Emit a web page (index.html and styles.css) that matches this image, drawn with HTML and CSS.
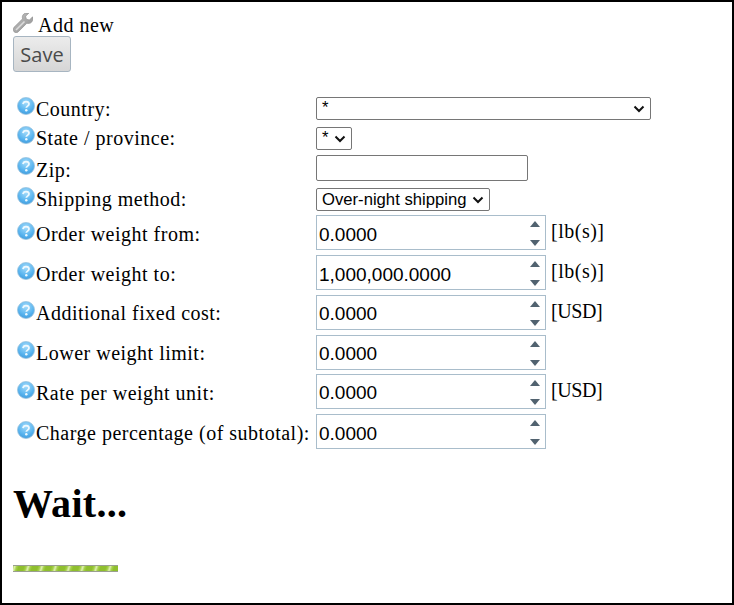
FILE: index.html
```html
<!DOCTYPE html>
<html lang="en">
<head>
<meta charset="utf-8">
<title>Add new</title>
<link rel="stylesheet" href="styles.css">
</head>
<body>
<div class="page">
  <div class="heading">
    <svg class="wrench" viewBox="0 0 20 20" width="20" height="20"><defs><linearGradient id="wg" x1="0" y1="0" x2="1" y2="1"><stop offset="0" stop-color="#c4c4c4"/><stop offset="1" stop-color="#8f8f8f"/></linearGradient></defs><path d="M19.600 3.800 16.400 7l-3-.8-.8-3L15.800.2C13.400-.4 10.900.1 9.800 2.200c-.6 1.200-.6 2.500-.2 3.600L1 14.300c-1.300 1.300-1.300 3.200 0 4.400 1.300 1.300 3.200 1.300 4.400 0l8.500-8.500c1.200.4 2.500.4 3.600-.2 2.300-1.200 2.900-4 2.200-6.200z" fill="url(#wg)" stroke="#8a8a8a" stroke-width=".6"/><path d="M3 17 11.500 8.500" stroke="#dcdcdc" stroke-width="1.600"/></svg>
    <span>Add new</span>
  </div>
  <button class="save" type="button">Save</button>
  <div class="form">
    <div class="row r1"><div class="label"><svg class="help" viewBox="0 0 18 18"><use href="#q"/></svg><span>Country:</span></div><select class="sel s-wide"><option>*</option></select></div>
    <div class="row r2"><div class="label"><svg class="help" viewBox="0 0 18 18"><use href="#q"/></svg><span>State / province:</span></div><select class="sel s-state"><option>*</option></select></div>
    <div class="row r3"><div class="label"><svg class="help" viewBox="0 0 18 18"><use href="#q"/></svg><span>Zip:</span></div><input class="zip" type="text"></div>
    <div class="row r4"><div class="label"><svg class="help" viewBox="0 0 18 18"><use href="#q"/></svg><span>Shipping method:</span></div><select class="sel s-ship"><option>Over-night shipping</option></select></div>
    <div class="row rn rlow"><div class="label"><svg class="help" viewBox="0 0 18 18"><use href="#q"/></svg><span>Order weight from:</span></div><div class="num"><span>0.0000</span><i class="spin"><b class="up"></b><b class="down"></b></i></div><span class="unit">[lb(s)]</span></div>
    <div class="row rn rlow"><div class="label"><svg class="help" viewBox="0 0 18 18"><use href="#q"/></svg><span>Order weight to:</span></div><div class="num"><span>1,000,000.0000</span><i class="spin"><b class="up"></b><b class="down"></b></i></div><span class="unit">[lb(s)]</span></div>
    <div class="row rn rhigh"><div class="label"><svg class="help" viewBox="0 0 18 18"><use href="#q"/></svg><span>Additional fixed cost:</span></div><div class="num"><span>0.0000</span><i class="spin"><b class="up"></b><b class="down"></b></i></div><span class="unit usd">[USD]</span></div>
    <div class="row rn r8 rhigh"><div class="label"><svg class="help" viewBox="0 0 18 18"><use href="#q"/></svg><span>Lower weight limit:</span></div><div class="num"><span>0.0000</span><i class="spin"><b class="up"></b><b class="down"></b></i></div></div>
    <div class="row rn"><div class="label"><svg class="help" viewBox="0 0 18 18"><use href="#q"/></svg><span>Rate per weight unit:</span></div><div class="num"><span>0.0000</span><i class="spin"><b class="up"></b><b class="down"></b></i></div><span class="unit usd">[USD]</span></div>
    <div class="row rn rlast"><div class="label"><svg class="help" viewBox="0 0 18 18"><use href="#q"/></svg><span>Charge percentage (of subtotal):</span></div><div class="num"><span>0.0000</span><i class="spin"><b class="up"></b><b class="down"></b></i></div></div>
  </div>
  <h1 class="wait">Wait...</h1>
  <div class="progress"></div>
</div>
<svg class="defs" width="0" height="0" aria-hidden="true">
  <defs>
    <radialGradient id="qg" cx=".5" cy=".3" r=".75"><stop offset="0" stop-color="#a5dcfb"/><stop offset=".65" stop-color="#55b2ee"/><stop offset="1" stop-color="#3f97d8"/></radialGradient>
    <symbol id="q" viewBox="0 0 18 18">
      <circle cx="9" cy="9" r="8.500" fill="url(#qg)" stroke="#9cc4de" stroke-width=".8"/>
      <path d="M6 7.200C6.200 5.400 7.500 4.600 9 4.600c1.800 0 3 1 3 2.500 0 2-2.700 2-2.700 3.700" fill="none" stroke="#eef9ff" stroke-width="1.800"/>
      <circle cx="9.300" cy="13.200" r="1.200" fill="#eef9ff"/>
    </symbol>
  </defs>
</svg>
</body>
</html>
```
FILE: styles.css
```css
* { box-sizing: border-box; }
html, body { margin: 0; padding: 0; }
body { width: 734px; height: 605px; overflow: hidden; background: #fff; }
.page {
  height: 605px;
  border: 2px solid #000;
  padding: 11px 11px 0;
  font-family: "Liberation Serif", serif;
  font-size: 20px;
  letter-spacing: .5px;
  color: #000;
}
.heading { display: flex; align-items: flex-start; height: 23px; line-height: 24px; }
.wrench { flex: none; margin-right: 5px; }
.save {
  display: block;
  width: 58px;
  height: 36px;
  padding: 0;
  border: 1px solid #a7b5c1;
  border-radius: 3px;
  background: linear-gradient(#ececec, #d6d6d6);
  color: #4a4a4a;
  font: 20px "Open Sans", sans-serif;
}
.form { margin-top: 25px; }
.row { display: flex; align-items: flex-start; }
.r1 { height: 30px; }
.r2 { height: 28px; }
.r3 { height: 33px; }
.r4 { height: 27px; }
.rn { height: 40px; }
.r8 { height: 39px; }
.label { width: 303px; flex: none; display: flex; align-items: flex-start; padding-left: 4px; }
.help { width: 18px; height: 18px; flex: none; margin-right: 1px; }
.label span { line-height: 24px; white-space: nowrap; }
.r2 .label { margin-top: -1px; }
.r3 .help { margin-top: 2px; }
.r3 .label span { padding-top: 3px; }
.r4 .help { margin-top: -1px; }
.r4 .label span { margin-top: -1px; }
.rn .label { padding-top: 7px; }
.rhigh .label { padding-top: 6px; }
.sel {
  appearance: none;
  height: 23px;
  padding: 0 0 2px 5px;
  border: 1px solid #767676;
  border-radius: 2px;
  background: #fff url("data:image/svg+xml,%3Csvg xmlns='http://www.w3.org/2000/svg' width='12' height='8'%3E%3Cpath d='M1.500 1.500 6 6l4.500-4.500' fill='none' stroke='%23111' stroke-width='2'/%3E%3C/svg%3E") no-repeat right 5px center;
  color: #000;
  font: 16.67px "Liberation Sans", sans-serif;
}
.s-wide { width: 335px; }
.s-state { width: 36px; }
.s-ship { width: 174px; padding-bottom: 0; }
.zip { width: 212px; height: 26px; border: 1px solid #767676; border-radius: 2px; padding: 0; }
.num {
  width: 230px;
  height: 35px;
  flex: none;
  display: flex;
  align-items: center;
  justify-content: space-between;
  border: 1px solid #a9bdcb;
  padding: 2px 0 0 2px;
  font: 19px "Liberation Sans", sans-serif;
  letter-spacing: 0;
}
.rlow .num, .rlast .num { padding-top: 4px; }
.spin { display: flex; flex-direction: column; justify-content: space-between; height: 25px; width: 10px; margin: -1px 5px 0 0; }
.rlow .spin, .rlast .spin { margin-top: -3px; }
.spin b { width: 0; height: 0; border-left: 5px solid transparent; border-right: 5px solid transparent; }
.up { border-bottom: 6px solid #51626f; }
.down { border-top: 6px solid #51626f; }
.unit { margin-left: 5px; line-height: 32px; }
.usd { letter-spacing: -.4px; }
.wait { margin: 27px 0 0; font-size: 40px; line-height: 46px; font-weight: bold; letter-spacing: .3px; }
.progress {
  width: 105px;
  height: 7px;
  margin-top: 38px;
  background: repeating-linear-gradient(-72deg, #8fbf2e 0 5px, #a5d04a 7px, #dff0b0 9px, #a5d04a 11px, #8fbf2e 13px);
  box-shadow: inset 0 1px #9a9f90, inset 0 -1px #9a9f90;
}
.defs { position: absolute; }
```
